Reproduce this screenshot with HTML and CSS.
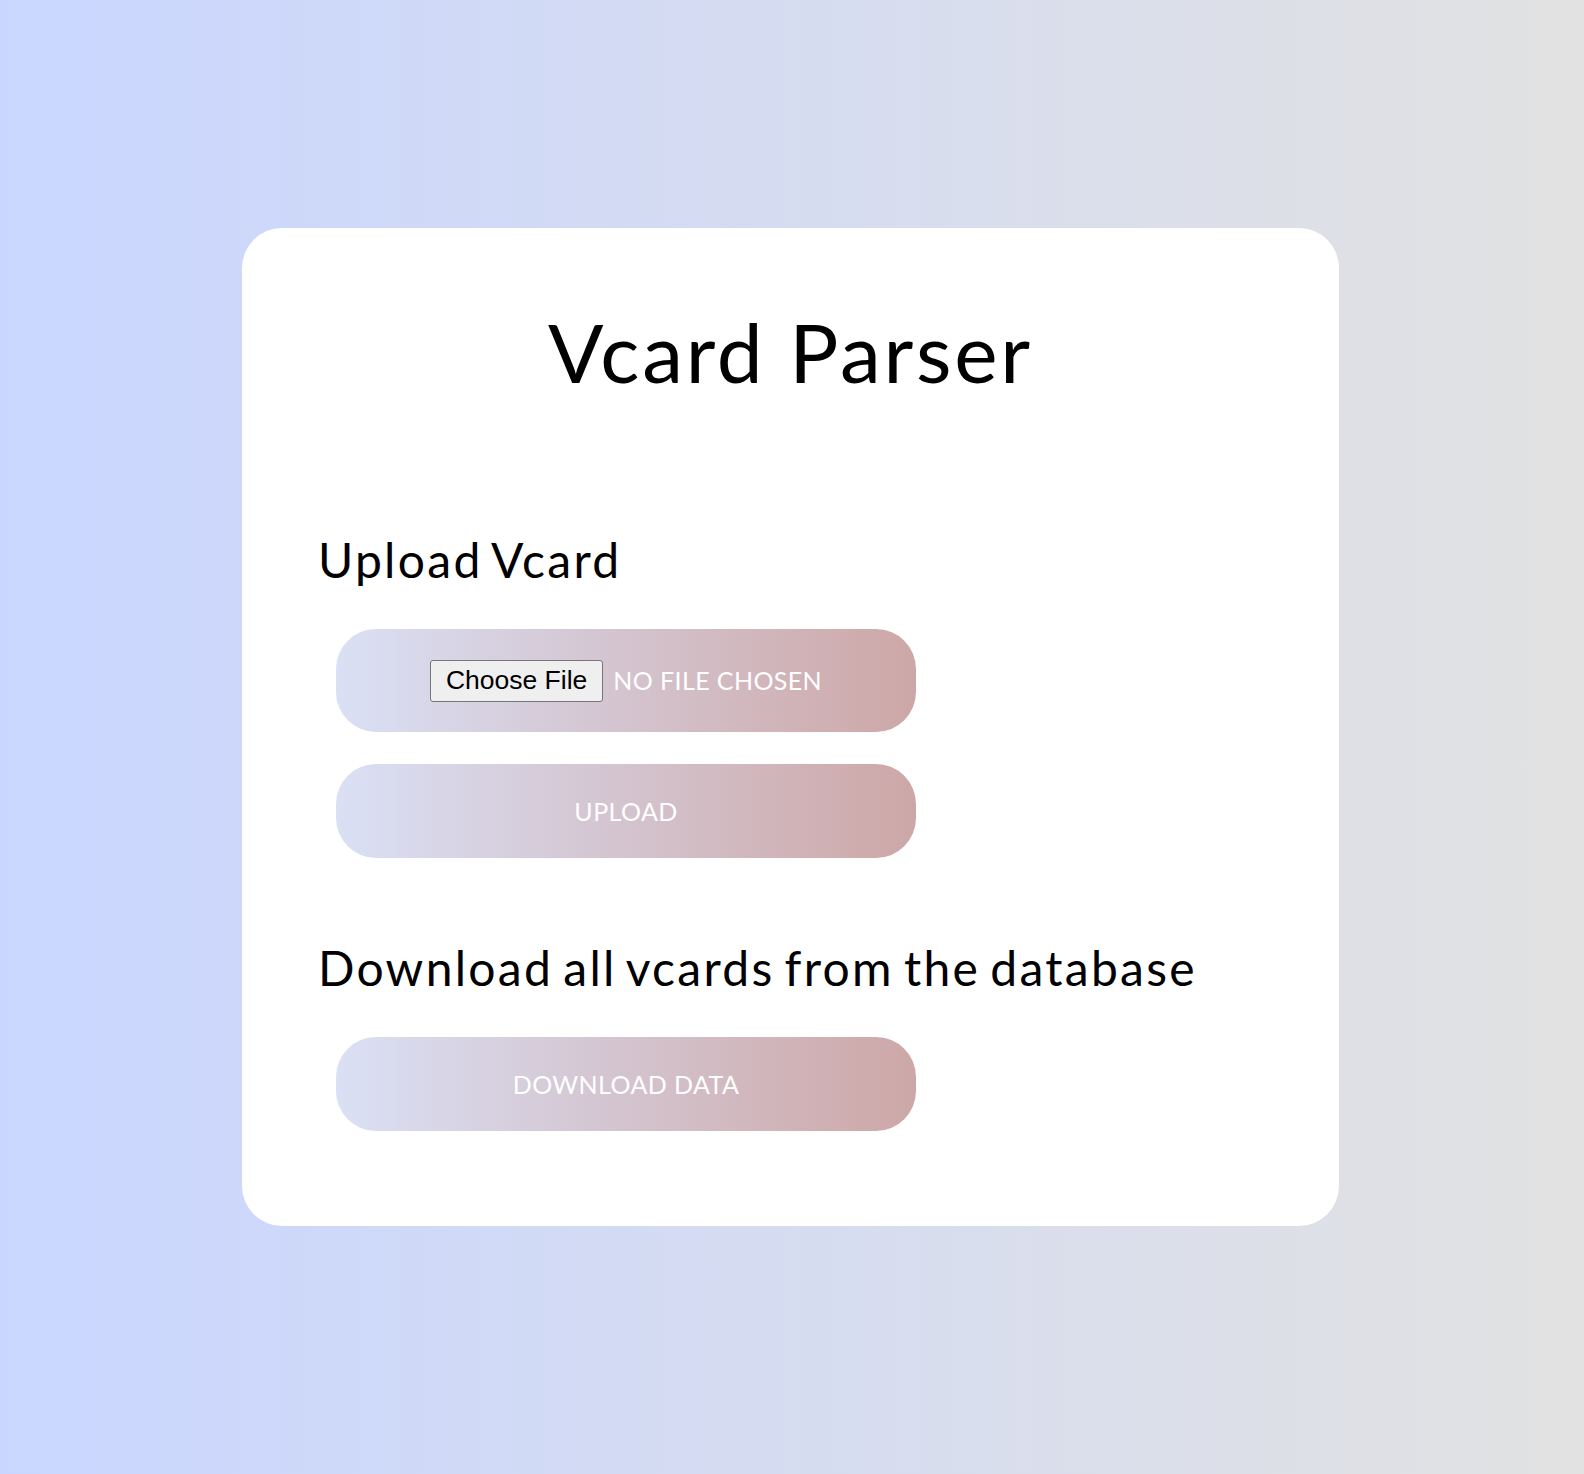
FILE: index.html
```html
<!DOCTYPE html>
<html lang="en">
<head>
<meta charset="utf-8">
<title>Vcard Parser</title>
<link rel="stylesheet" href="styles.css">
</head>
<body>
<main class="page">
  <section class="card">
    <h1 class="title">Vcard Parser</h1>
    <h2 class="section-title upload-title">Upload Vcard</h2>
    <form class="form">
      <label class="pill file-pill">
        <input type="file" class="file-input" accept=".vcf">
        <span class="file-btn">Choose File</span>
        <span class="file-name">No file chosen</span>
      </label>
      <button type="button" class="pill action">Upload</button>
    </form>
    <h2 class="section-title download-title">Download all vcards from the database</h2>
    <div class="form">
      <button type="button" class="pill action">Download data</button>
    </div>
  </section>
</main>
</body>
</html>
```

FILE: styles.css
```css
html {
  min-height: 100%;
  background: linear-gradient(to right, #c9d6ff, #e2e2e2);
}

body {
  margin: 0;
  font-family: "Lato", "Liberation Sans", sans-serif;
  color: #000;
}

.page {
  padding-top: 228px;
  padding-bottom: 250px;
  padding-right: 3px;
}

.card {
  width: 1097px;
  margin: 0 auto;
  box-sizing: border-box;
  background: #fff;
  border-radius: 40px;
  padding: 82px 76px 95px;
  display: flex;
  flex-direction: column;
}

.title {
  margin: 0;
  font-size: 82px;
  line-height: 82px;
  font-weight: 400;
  letter-spacing: 2.8px;
  text-align: center;
}

.section-title {
  margin: 0;
  font-size: 48px;
  line-height: 48px;
  font-weight: 400;
  letter-spacing: 2.3px;
  word-spacing: -4.5px;
}

.upload-title {
  margin-top: 144px;
}

.download-title {
  margin-top: 86px;
}

.form {
  display: flex;
  flex-direction: column;
  gap: 32px;
  margin: 45px 0 0 18px;
}

.pill {
  width: 580px;
  box-sizing: border-box;
  border: none;
  border-radius: 40px;
  background: linear-gradient(to right, #dae0f5, #cda7a7);
  display: flex;
  align-items: center;
  justify-content: center;
  font-family: "Lato", "Liberation Sans", sans-serif;
  font-weight: 400;
  font-size: 25px;
  letter-spacing: 0.4px;
  color: #fff;
  text-transform: uppercase;
  padding: 0;
}

.action {
  height: 94px;
  cursor: pointer;
}

.file-pill {
  height: 103px;
  cursor: pointer;
}

.file-input {
  display: none;
}

.file-btn {
  font-family: "Liberation Sans", Arial, sans-serif;
  font-weight: 400;
  font-size: 26.5px;
  letter-spacing: 0;
  color: #000;
  text-transform: none;
  background: #efefef;
  border: 1px solid #767676;
  border-radius: 3px;
  height: 42px;
  box-sizing: border-box;
  padding: 0 15px;
  display: flex;
  align-items: center;
  margin-right: 10px;
}

.file-name {
  line-height: 1;
}
```
